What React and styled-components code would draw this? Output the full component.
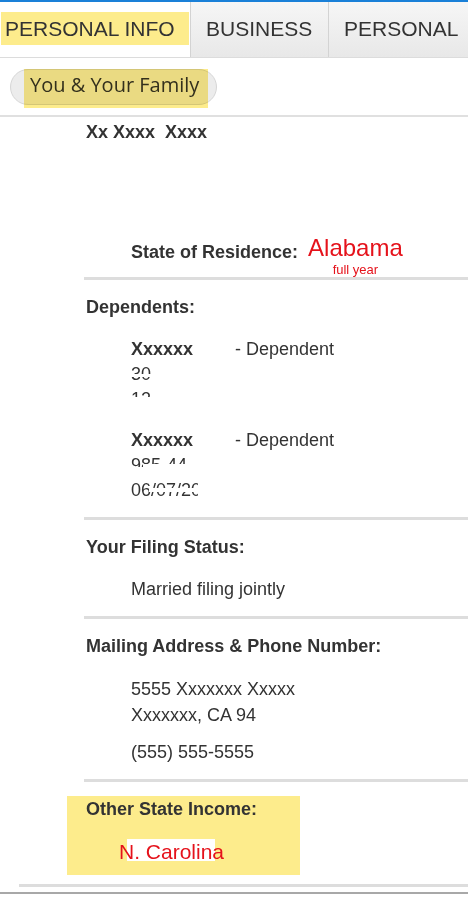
import React from "react";
import styled, { createGlobalStyle } from "styled-components";

const GlobalStyle = createGlobalStyle`
  html, body { margin: 0; padding: 0; background: #fff; }
  body {
    font-family: "Liberation Sans", Arial, sans-serif;
    color: #333;
    width: 468px;
    overflow: hidden;
  }
  * { box-sizing: border-box; }
`;

const Page = styled.div`
  width: 468px;
  height: 897px;
  overflow: hidden;
  background: #fff;
`;

const TabBar = styled.div`
  display: flex;
  height: 58px;
  border-top: 2px solid #1a80d8;
  border-bottom: 1px solid #dcdcdc;
`;

const Tab = styled.div`
  display: flex;
  align-items: center;
  flex-shrink: 0;
  width: ${(p) => p.$width || "auto"};
  flex-grow: ${(p) => (p.$grow ? 1 : 0)};
  padding-left: ${(p) => (p.$active ? "1px" : "15px")};
  padding-bottom: 3px;
  font-size: 21px;
  color: #333;
  white-space: nowrap;
  background: ${(p) =>
    p.$active ? "#fff" : "linear-gradient(#f6f6f6, #e8e8e8)"};
  border-left: ${(p) => (p.$active ? "none" : "1px solid #d3d3d3")};
`;

const TabLabel = styled.span`
  display: inline-block;
  line-height: 33px;
  padding-left: ${(p) => (p.$marked ? "4px" : "0")};
  width: ${(p) => (p.$marked ? "188px" : "auto")};
  background: ${(p) => (p.$marked ? "#fdec8c" : "transparent")};
`;

const PillRow = styled.div`
  height: 59px;
  padding: 11px 0 0 10px;
  border-bottom: 2px solid #e0e0e0;
`;

const Pill = styled.div`
  position: relative;
  display: inline-flex;
  align-items: center;
  width: 207px;
  height: 36px;
  padding: 0 0 4px 19px;
  border: 1px solid #d6d6d6;
  border-radius: 18px;
  background: #ececec;
  font-family: "Open Sans", "Liberation Sans", sans-serif;
  font-size: 20px;
  line-height: 24px;
  color: #333;
`;

const PillMark = styled.span`
  position: absolute;
  left: 13px;
  top: -1px;
  width: 184px;
  height: 39px;
  background: #fdec8c;
  mix-blend-mode: multiply;
  pointer-events: none;
`;

const Main = styled.div`
  margin-left: 19px;
  border-bottom: 3px solid #dddddd;
`;

const Section = styled.section`
  margin-left: 65px;
  padding: ${(p) => p.$pad || "17px 0 14px"};
  border-bottom: ${(p) => (p.$last ? "none" : "3px solid #dddddd")};
`;

const Header = styled.div`
  font-size: 18px;
  line-height: 20px;
  font-weight: bold;
  padding-left: 2px;
  white-space: pre;
`;

const Body = styled.div`
  display: flex;
  flex-direction: column;
  gap: ${(p) => p.$gap || "14px"};
  margin-top: 20px;
  padding-left: ${(p) => p.$indent || "47px"};
`;

const Line = styled.div`
  font-size: 18px;
  line-height: ${(p) => p.$lh || "25px"};
`;

const ResidenceRow = styled.div`
  display: flex;
  align-items: flex-start;
  margin-top: 92px;
  padding-left: 47px;
`;

const ResidenceLabel = styled.div`
  margin-top: 8px;
  font-size: 18px;
  line-height: 20px;
  font-weight: bold;
`;

const StateValue = styled.div`
  display: flex;
  flex-direction: column;
  align-items: center;
  margin-left: 10px;
  color: #e5121b;
`;

const StateName = styled.div`
  font-size: 24px;
  line-height: 28px;
`;

const StateNote = styled.div`
  font-size: 13px;
  line-height: 15px;
`;

const Dependent = styled.div`
  display: grid;
  grid-template-columns: 104px auto;
  font-size: 18px;
  line-height: 25px;
`;

const DepName = styled.div`
  font-weight: bold;
`;

const DepCell = styled.div`
  grid-column: 1 / span 2;
  height: 25px;
`;

const Clip = styled.div`
  position: relative;
  height: ${(p) => p.$h}px;
  width: ${(p) => (p.$w ? `${p.$w}px` : "auto")};
  overflow: hidden;
  white-space: nowrap;
`;

const Mask = styled.span`
  position: absolute;
  left: ${(p) => p.$x}px;
  top: ${(p) => p.$y}px;
  width: ${(p) => p.$w}px;
  height: ${(p) => p.$h}px;
  background: #fff;
`;

const HighlightBox = styled.div`
  margin-left: -17px;
  width: 233px;
  padding: 3px 0 11px 17px;
  background: #fdec8c;
`;

const OtherState = styled.span`
  position: relative;
  z-index: 0;
  display: inline-block;
  color: #e5121b;
  font-size: 21px;
  line-height: 25px;

  &::before {
    content: "";
    position: absolute;
    z-index: -1;
    left: 8px;
    top: 0;
    width: 88px;
    height: 22px;
    background: #fff;
  }
`;

const Footer = styled.div`
  margin-top: 5px;
  border-top: 2px solid #a8a8a8;
  height: 4px;
`;

export default function App() {
  return (
    <Page>
      <GlobalStyle />
      <TabBar>
        <Tab $active $width="190px">
          <TabLabel $marked>PERSONAL INFO</TabLabel>
        </Tab>
        <Tab $width="138px">
          <TabLabel>BUSINESS</TabLabel>
        </Tab>
        <Tab $grow>
          <TabLabel>PERSONAL</TabLabel>
        </Tab>
      </TabBar>

      <PillRow>
        <Pill>
          You &amp; Your Family
          <PillMark />
        </Pill>
      </PillRow>

      <Main>
        <Section $pad="5px 0 0">
          <Header>{"Xx Xxxx  Xxxx"}</Header>
          <ResidenceRow>
            <ResidenceLabel>State of Residence:</ResidenceLabel>
            <StateValue>
              <StateName>Alabama</StateName>
              <StateNote>full year</StateNote>
            </StateValue>
          </ResidenceRow>
        </Section>

        <Section>
          <Header>Dependents:</Header>
          <Body $gap="16px">
            <Dependent>
              <DepName>Xxxxxx</DepName>
              <div>- Dependent</div>
              <DepCell>
                <Clip $h={25}>
                  30
                  <Mask $x={0} $y={12} $w={30} $h={3} />
                  <Mask $x={0} $y={21} $w={30} $h={4} />
                </Clip>
              </DepCell>
              <DepCell>
                <Clip $h={10}>12</Clip>
              </DepCell>
            </Dependent>
            <Dependent>
              <DepName>Xxxxxx</DepName>
              <div>- Dependent</div>
              <DepCell>
                <Clip $h={14} $w={67}>
                  985-44-
                  <Mask $x={12} $y={11} $w={60} $h={4} />
                </Clip>
              </DepCell>
              <DepCell>
                <Clip $h={25} $w={67}>
                  06/07/20
                  <Mask $x={18} $y={10} $w={50} $h={4} />
                </Clip>
              </DepCell>
            </Dependent>
          </Body>
        </Section>

        <Section>
          <Header>Your Filing Status:</Header>
          <Body>
            <Line>Married filing jointly</Line>
          </Body>
        </Section>

        <Section>
          <Header>Mailing Address &amp; Phone Number:</Header>
          <Body $gap="12px">
            <div>
              <Line $lh="26px">5555 Xxxxxxx Xxxxx</Line>
              <Line $lh="26px">Xxxxxxx, CA 94</Line>
            </div>
            <Line>(555) 555-5555</Line>
          </Body>
        </Section>

        <Section $last $pad="14px 0 9px">
          <HighlightBox>
            <Header>Other State Income:</Header>
            <Body $indent="35px">
              <div>
                <OtherState>N. Carolina</OtherState>
              </div>
            </Body>
          </HighlightBox>
        </Section>
      </Main>
      <Footer />
    </Page>
  );
}
